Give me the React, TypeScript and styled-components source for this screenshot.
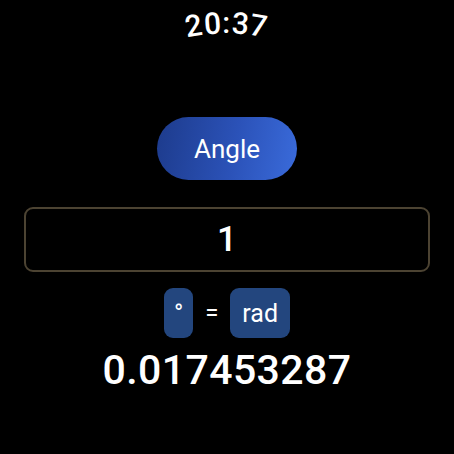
import React from "react";
import styled, { createGlobalStyle } from "styled-components";

const GlobalStyle = createGlobalStyle`
  html, body {
    margin: 0;
    padding: 0;
    background: #000;
  }
  body {
    font-family: Roboto, "Noto Sans", sans-serif;
    color: #fff;
  }
`;

const Screen = styled.div`
  width: 454px;
  height: 454px;
  background: #000;
  display: flex;
  flex-direction: column;
  align-items: center;
  box-sizing: border-box;
  padding-top: 8px;
  overflow: hidden;
`;

const Clock = styled.div`
  display: flex;
  align-items: flex-end;
  height: 30px;
  font-size: 30px;
  font-weight: 500;
  line-height: 30px;
  letter-spacing: 1.5px;
  margin-bottom: 79px;
`;

const ClockChar = styled.span<{ $rot: number; $dy: number }>`
  display: inline-block;
  transform: translateY(${(p) => p.$dy}px) rotate(${(p) => p.$rot}deg);
`;

const Pill = styled.button`
  width: 140px;
  height: 63px;
  border: none;
  border-radius: 32px;
  background: linear-gradient(100deg, #1d3b8c 0%, #2b52b8 55%, #3a6bdb 100%);
  color: #fff;
  font-family: Roboto, sans-serif;
  font-size: 26px;
  padding: 0;
  margin-bottom: 27px;
`;

const InputBox = styled.div`
  width: 406px;
  height: 65px;
  box-sizing: border-box;
  border: 2px solid #4c4332;
  border-radius: 9px;
  display: flex;
  align-items: center;
  justify-content: center;
  font-size: 35px;
  font-weight: 500;
  margin-bottom: 16px;
`;

const UnitRow = styled.div`
  display: flex;
  align-items: center;
  margin-bottom: 12px;
`;

const UnitButton = styled.div<{ $pad: number }>`
  height: 50px;
  box-sizing: border-box;
  padding: 0 ${(p) => p.$pad}px;
  background: #23467e;
  border-radius: 9px;
  display: flex;
  align-items: center;
  justify-content: center;
  font-size: 25px;
`;

const Equals = styled.div`
  font-size: 24px;
  width: 37px;
  text-align: center;
`;

const Result = styled.div`
  font-size: 41px;
  font-weight: 500;
  letter-spacing: 0.4px;
  line-height: 40px;
`;

const clock: [string, number, number][] = [
  ["2", -9, 3],
  ["0", -4, 1],
  [":", 0, 0],
  ["3", 4, 1],
  ["7", 9, 3],
];

export default function App() {
  return (
    <>
      <GlobalStyle />
      <Screen>
        <Clock>
          {clock.map(([c, r, dy], i) => (
            <ClockChar key={i} $rot={r} $dy={dy}>
              {c}
            </ClockChar>
          ))}
        </Clock>
        <Pill>Angle</Pill>
        <InputBox>1</InputBox>
        <UnitRow>
          <UnitButton $pad={10}>°</UnitButton>
          <Equals>=</Equals>
          <UnitButton $pad={12}>rad</UnitButton>
        </UnitRow>
        <Result>0.017453287</Result>
      </Screen>
    </>
  );
}
